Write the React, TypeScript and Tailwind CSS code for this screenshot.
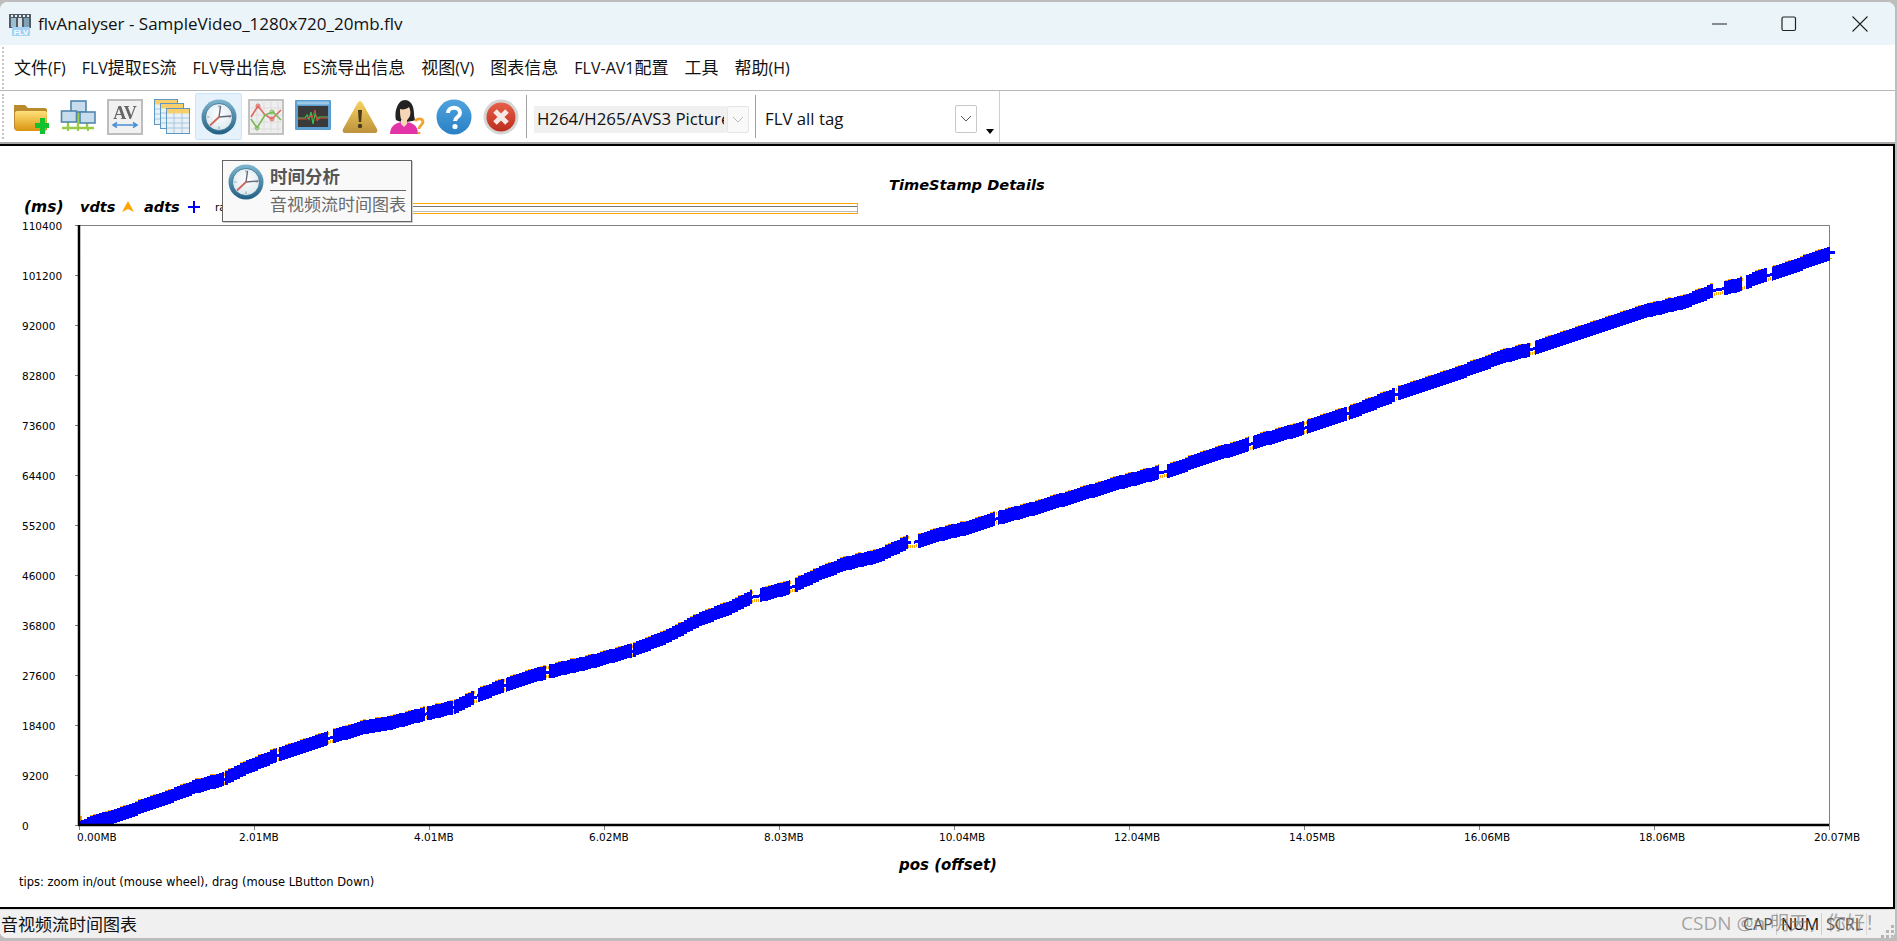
import React from "react";

const PTS: [number, number][] = [
  [80, 828],[87, 824],[110, 817],[160, 800],[193, 787],[223, 779],[240, 770],[273, 756],[327, 738],[360, 728],[393, 722],[423, 714],[453, 707],[473, 697],[503, 685],[527, 677],[546, 672],[593, 661],[632, 650],[667, 636],[697, 620],[733, 606],[750, 597],[760, 595],[790, 587],[820, 573],[843, 564],[877, 556],[907, 542],[918, 541],[947, 532],[967, 528],[993, 519],[1027, 510],[1077, 495],[1117, 483],[1159, 472],[1167, 471],[1203, 458],[1248, 444],[1253, 442],[1303, 428],[1348, 413],[1393, 395],[1460, 372],[1500, 357],[1530, 349],[1567, 337],[1640, 312],[1683, 302],[1713, 290],[1733, 286],[1765, 275],[1773, 273],[1830, 253],
];
const yAt = (x: number) => {
  if (x <= PTS[0][0]) return PTS[0][1];
  for (let i = 0; i < PTS.length - 1; i++) {
    const [a, b] = PTS[i];
    const [c, d] = PTS[i + 1];
    if (x >= a && x <= c) return b + ((d - b) * (x - a)) / (c - a);
  }
  return PTS[PTS.length - 1][1];
};
const NOTCHES: [number, number][] = [
  [224, 1],[277, 2],[328, 5],[425, 2],[453, 1],[474, 4],[504, 2],[546, 3],[632, 1],[752, 8],[790, 5],[908, 10],[995, 3],[1159, 8],[1249, 4],[1304, 3],[1347, 2],[1395, 3],[1530, 5],[1713, 11],[1742, 4],[1767, 5],
];
const inNotch = (x: number) => NOTCHES.find(([a, w]) => x >= a && x < a + w);
function buildBand() {
  let blue = "";
  let orange = "";
  for (let x = 80; x < 1830; x++) {
    const sx = x - (x % 3);
    const y = Math.round(yAt(sx));
    const n = inNotch(x);
    if (n) {
      const isGap = (n[0] === 908 && x >= 911 && x < 914) || n[0] === 1742;
      if (!isGap) blue += `M${x} ${y - 1}h1v3h-1z`;
      if (n[1] > 1 ? x % 2 === 0 : true) {
        orange += `M${x} ${y + 3}h1v3h-1z`;
        if (n[1] < 4 || x === n[0]) orange += `M${x} ${y - 6}h1v3h-1z`;
      }
    } else {
      const top = y - 7;
      const bottom = Math.min(y + 7, 825);
      blue += `M${x} ${top}h1v${bottom - top}h-1z`;
      if (x % 15 < 6) orange += `M${x} ${top - 1}h1v1h-1z`;
    }
  }
  blue += "M1830 251h5v3h-5z";
  orange += "M1828 250h2v1h-2zM1829 258h3v1h-3zM81 823h8v1h-8zM80 816h2v6h-2z";
  return { blue, orange };
}
const band = buildBand();

const MENU = ["文件(F)", "FLV提取ES流", "FLV导出信息", "ES流导出信息", "视图(V)", "图表信息", "FLV-AV1配置", "工具", "帮助(H)"];
const YL = ["110400", "101200", "92000", "82800", "73600", "64400", "55200", "46000", "36800", "27600", "18400", "9200", "0"];
const XL = ["0.00MB", "2.01MB", "4.01MB", "6.02MB", "8.03MB", "10.04MB", "12.04MB", "14.05MB", "16.06MB", "18.06MB", "20.07MB"];

const MenuLabel = ({ text }: { text: string }) => (
  <span className="whitespace-nowrap">
    {text.split(/([\u4e00-\u9fff]+)/).filter(Boolean).map((p, i) =>
      /[\u4e00-\u9fff]/.test(p) ? (
        <span key={i} className="text-[17px]">{p}</span>
      ) : (
        <span key={i} className="text-[16px]">{p}</span>
      )
    )}
  </span>
);

const Clock = ({ id, size = 36 }: { id: string; size?: number }) => (
  <svg width={size} height={size} viewBox="0 0 36 36">
    <defs>
      <linearGradient id={id} x1="0" y1="0" x2="0" y2="1">
        <stop offset="0" stopColor="#7fb6cf" />
        <stop offset="1" stopColor="#1f5f83" />
      </linearGradient>
      <radialGradient id={id + "f"} cx="0.5" cy="0.4" r="0.7">
        <stop offset="0" stopColor="#ffffff" />
        <stop offset="1" stopColor="#d4e4ec" />
      </radialGradient>
    </defs>
    <circle cx="18" cy="18" r="17.5" fill={`url(#${id})`} />
    <circle cx="18" cy="18" r="13.5" fill={`url(#${id + "f"})`} stroke="#2c6b8c" strokeWidth="0.8" />
    <path d="M18 6v2.500M18 27.500V30M6 18h2.500M27.500 18H30" stroke="#8da5b2" strokeWidth="1.2" />
    <path d="M18 18L19.500 7.500M18 18L30 17" stroke="#667" strokeWidth="1.4" fill="none" strokeLinecap="round" />
    <path d="M18 18L9.500 26" stroke="#d1685f" strokeWidth="1.8" strokeLinecap="round" />
  </svg>
);

const Folder = () => (
  <svg width="36" height="36" viewBox="0 0 36 36">
    <defs>
      <linearGradient id="fo" x1="0" y1="0" x2="0" y2="1">
        <stop offset="0" stopColor="#ffe27a" />
        <stop offset="1" stopColor="#d9930f" />
      </linearGradient>
    </defs>
    <path d="M1 6h11l3 3h17c1 0 2 1 2 2v20H3c-1 0-2-1-2-2z" fill="#b98a2e" />
    <path d="M2 14c0-1 1-2 2-2h28c1 0 2 1 2 2l-1 17c0 1-1 1-2 1H4c-1 0-2-1-2-2z" fill="url(#fo)" />
    <path d="M22 24h5v-5h5v5h5v5h-5v6h-5v-6h-5z" fill="#12c12e" />
  </svg>
);
const Net = () => (
  <svg width="36" height="36" viewBox="0 0 36 36">
    <path d="M18 12v16M8 22v6M27 22v6M2 29h32" stroke="#9acb46" strokeWidth="2.400" fill="none" />
    <path d="M8 32v-3M18 32v-3M28 32v-3" stroke="#9acb46" strokeWidth="2" />
    <rect x="11" y="2" width="15" height="11" fill="#c7dcec" stroke="#4f87ad" strokeWidth="1.600" />
    <rect x="1.500" y="12" width="15" height="11" fill="#c7dcec" stroke="#4f87ad" strokeWidth="1.600" />
    <rect x="20" y="13" width="15" height="11" fill="#c7dcec" stroke="#4f87ad" strokeWidth="1.600" />
  </svg>
);
const AV = () => (
  <svg width="36" height="36" viewBox="0 0 36 36">
    <rect x="1" y="1" width="34" height="34" fill="#f1f1f1" stroke="#bdbdbd" strokeWidth="2" />
    <text x="18" y="20" textAnchor="middle" fontFamily="Liberation Serif, serif" fontWeight="700" fontSize="18" fill="#666">AV</text>
    <path d="M6 26h24M10 23.500l-4 2.500 4 2.500M26 23.500l4 2.500-4 2.500" stroke="#4a90d9" strokeWidth="1.500" fill="none" />
  </svg>
);
const Tab = ({ x, y }: { x: number; y: number }) => (
  <g transform={`translate(${x} ${y})`}>
    <rect x="0.500" y="0.500" width="23" height="25" fill="#e8f1f8" stroke="#5d97c0" />
    <rect x="1" y="1" width="22" height="4.500" fill="#f8cf6b" />
    <path d="M1 10h22M1 15h22M1 20h22M8 5v20M16 5v20" stroke="#a9c6dc" strokeWidth="1" />
  </g>
);
const Tables = () => (
  <svg width="36" height="36" viewBox="0 0 36 36">
    <Tab x={0} y={0} />
    <Tab x={6} y={4} />
    <Tab x={12} y={9} />
  </svg>
);
const Graph = () => (
  <svg width="36" height="36" viewBox="0 0 36 36">
    <rect x="1" y="1" width="34" height="34" fill="#eeeeee" stroke="#c2c2c2" strokeWidth="2" />
    <path d="M3 9h30M3 16h30M3 23h30M3 30h30M9 3v30M16 3v30M23 3v30M30 3v30" stroke="#dcdcdc" strokeWidth="1" />
    <path d="M3 18L10 7l7 9 7 4 9-9" stroke="#e0685f" strokeWidth="1.600" fill="none" />
    <path d="M3 20l6 9 8-13 8-3 8 8" stroke="#7db95a" strokeWidth="1.600" fill="none" />
    <circle cx="10" cy="7" r="2" fill="none" stroke="#e0685f" />
    <circle cx="24" cy="20" r="2" fill="none" stroke="#e0685f" />
    <circle cx="9" cy="29" r="2" fill="none" stroke="#7db95a" />
    <circle cx="24" cy="13" r="2" fill="none" stroke="#7db95a" />
  </svg>
);
const Monitor = () => (
  <svg width="36" height="36" viewBox="0 0 36 36">
    <rect x="0" y="1" width="36" height="30" rx="1" fill="#5c9fd0" />
    <rect x="2" y="2.500" width="32" height="3" fill="#9cc9e8" />
    <rect x="3" y="7" width="30" height="21" fill="#3a3a3a" />
    <path d="M3 19h7l2-3 2 4 2-7 2 12 2-10 2 5 2-2h9" stroke="#3fc04d" strokeWidth="1.200" fill="none" />
    <path d="M3 20h9l3-3 2 2 3-8 2 11 3-3h8" stroke="#d9483f" strokeWidth="1" fill="none" />
  </svg>
);
const Warn = () => (
  <svg width="36" height="36" viewBox="0 0 36 36">
    <defs>
      <linearGradient id="wa" x1="0" y1="0" x2="0" y2="1">
        <stop offset="0" stopColor="#f6d25e" />
        <stop offset="1" stopColor="#bd923c" />
      </linearGradient>
    </defs>
    <path d="M18 2c1 0 2 1 2.500 2L35 30c1 2 0 4-2 4H3c-2 0-3-2-2-4L15.500 4C16 3 17 2 18 2z" fill="url(#wa)" />
    <path d="M16 11h4l-.8 12h-2.400z" fill="#4a3a20" />
    <circle cx="18" cy="27" r="2.200" fill="#4a3a20" />
  </svg>
);
const Person = () => (
  <svg width="36" height="36" viewBox="0 0 36 36">
    <path d="M1 35c0-8 6-12 14-12s14 3 14 12z" fill="#e233a8" />
    <path d="M7 21C5 12 9 1 16 1c8 0 9 10 9 14 0 3 1 5 1 6-3 2-15 3-19 0z" fill="#222" />
    <path d="M11 10c3 1 7 0 9-2 2 4 2 9-1 12-2 3-5 3-7 0-1-3-1-7-1-10z" fill="#f7d6b8" />
    <path d="M12 21h6v4l-3 3-3-3z" fill="#f7d6b8" />
    <path d="M26 22c2-3 8-3 8 1 0 3-4 3-4 7M30 33v2" stroke="#f0a42d" strokeWidth="2.800" fill="none" />
  </svg>
);
const Help = () => (
  <svg width="36" height="36" viewBox="0 0 36 36">
    <defs>
      <linearGradient id="he" x1="0" y1="0" x2="0" y2="1">
        <stop offset="0" stopColor="#4fa3de" />
        <stop offset="1" stopColor="#2a80c4" />
      </linearGradient>
    </defs>
    <circle cx="18" cy="18" r="17.500" fill="url(#he)" />
    <path d="M12 14c0-7 12-7 12 0 0 4-5 4-5 8" stroke="#fff" strokeWidth="4" fill="none" />
    <circle cx="19" cy="27.500" r="2.600" fill="#fff" />
  </svg>
);
const CloseIc = () => (
  <svg width="36" height="36" viewBox="0 0 36 36">
    <defs>
      <linearGradient id="cl" x1="0" y1="0" x2="0" y2="1">
        <stop offset="0" stopColor="#e8604a" />
        <stop offset="1" stopColor="#bb2c1c" />
      </linearGradient>
    </defs>
    <circle cx="18" cy="18" r="17.500" fill="#d5d5d5" />
    <circle cx="18" cy="18" r="14.500" fill="url(#cl)" />
    <path d="M12 12l12 12M24 12L12 24" stroke="#f6e8e4" strokeWidth="5" />
  </svg>
);
const AppIcon = () => (
  <svg width="22" height="24" viewBox="0 0 22 24" className="shrink-0">
    <rect x="0" y="2" width="22" height="14" fill="#4e5c68" />
    <path d="M2 3h2v2H2zM6 3h2v2H6zM10 3h2v2h-2zM14 3h2v2h-2zM18 3h2v2h-2z" fill="#e8eef2" />
    <rect x="2" y="6" width="5" height="9" fill="#9dbdd0" />
    <rect x="9" y="6" width="4" height="9" fill="#d6dee3" />
    <rect x="15" y="6" width="5" height="9" fill="#7fa0b5" />
    <rect x="3" y="15" width="18" height="9" rx="1" fill="#a5d3f5" />
    <text x="12" y="23" textAnchor="middle" fontFamily="Liberation Sans, sans-serif" fontWeight="700" fontSize="8" fill="#fff">FLV</text>
  </svg>
);

const TOOLS = [
  <Folder key="a" />, <Net key="b" />, <AV key="c" />, <Tables key="d" />, <Clock key="e" id="tbc" />,
  <Graph key="f" />, <Monitor key="g" />, <Warn key="h" />, <Person key="i" />, <Help key="j" />, <CloseIc key="k" />,
];

const Chev = ({ c }: { c: string }) => (
  <svg width="12" height="8" viewBox="0 0 12 8"><path d="M1 1l5 5 5-5" fill="none" stroke={c} strokeWidth="1" /></svg>
);

export default function App() {
  return (
    <div className="h-screen w-screen overflow-hidden bg-[#bdbdbd] pt-[2px] pr-[2px] pb-[3px] font-['Open_Sans','Noto_Sans_CJK_SC',sans-serif] text-black">
      <div className="relative flex h-full flex-col overflow-hidden rounded-t-[8px] rounded-b-[7px] bg-white">
        <header className="flex h-[43px] shrink-0 items-center bg-[#ebf4f8] pl-[9px]">
          <AppIcon />
          <span className="ml-[7px] text-[17px] leading-none text-[#111]">flvAnalyser - SampleVideo_1280x720_20mb.flv</span>
          <div className="ml-auto flex items-center">
            <svg width="16" height="16" viewBox="0 0 16 16" className="mr-[53px]"><path d="M0 8h15" stroke="#222" strokeWidth="1" /></svg>
            <svg width="16" height="16" viewBox="0 0 16 16" className="mr-[55px]"><rect x="1" y="1" width="13.500" height="13.500" rx="1.500" fill="none" stroke="#222" strokeWidth="1.200" /></svg>
            <svg width="16" height="16" viewBox="0 0 16 16" className="mr-[27px]"><path d="M.5.5l15 15M15.500.5l-15 15" stroke="#222" strokeWidth="1.100" /></svg>
          </div>
        </header>

        <nav className="flex h-[46px] shrink-0 items-center border-b border-[#b8b8b8] pl-[2px] leading-none text-[#111]">
          <div className="h-[42px] w-0 border-l-2 border-dotted border-[#c4c4c4]" />
          <div className="ml-[10px] flex items-center gap-[16px]">
            {MENU.map((m) => (
              <MenuLabel key={m} text={m} />
            ))}
          </div>
        </nav>

        <div className="flex h-[53px] shrink-0 border-b-[2px] border-[#a8a8a8]">
          <div className="flex w-[1000px] items-stretch border-r border-[#cfcfcf] pl-[2px]">
            <div className="my-[3px] w-0 border-l-2 border-dotted border-[#c4c4c4]" />
            <div className="ml-[3px] flex">
              {TOOLS.map((t, i) => (
                <div
                  key={i}
                  className={
                    i === 4
                      ? "my-[2px] flex w-[47px] items-center justify-center rounded-[2px] border border-[#cce4f7] bg-[#e5f1fb] blur-[0.3px]"
                      : "my-[2px] flex w-[47px] items-center justify-center blur-[0.3px]"
                  }
                >
                  {t}
                </div>
              ))}
            </div>
            <div className="my-[4px] ml-[2px] w-px bg-[#a0a0a0]" />
            <div className="ml-[7px] mt-[15px] flex h-[27px] w-[215px]">
              <div className="h-full w-[193px] bg-[#f0f0f0] pl-[3px] pr-[3px]">
                <div className="h-full overflow-hidden whitespace-nowrap text-[16.800px] leading-[26px] text-[#111]">H264/H265/AVS3 Picture</div>
              </div>
              <div className="flex h-full w-[22px] items-center justify-center rounded-[2px] border border-[#e5e5e5] bg-[#f9f9f9]"><Chev c="#bbb" /></div>
            </div>
            <div className="my-[4px] ml-[6px] w-px bg-[#a0a0a0]" />
            <div className="ml-[9px] mt-[15px] h-[27px] w-[190px] text-[16.800px] leading-[26px] text-[#111]">FLV all tag</div>
            <div className="mt-[14px] flex h-[28px] w-[22px] items-center justify-center rounded-[2px] border border-[#c8c8c8] bg-white"><Chev c="#555" /></div>
            <div className="ml-[9px] mt-[38px] h-0 w-0 border-x-[4px] border-t-[5px] border-x-transparent border-t-black" />
          </div>
        </div>

        <main className="relative min-h-0 flex-1 border-y-[2px] border-r-[2px] border-y-black border-r-black bg-white">
          <svg width="1893" height="761" viewBox="0 146 1893 761" className="block font-['DejaVu_Sans',sans-serif]">
            <text x="889" y="190" fontSize="14.600" fontWeight="700" fontStyle="italic" fill="#000">TimeStamp Details</text>
            <text x="24" y="212" fontSize="15.500" fontWeight="700" fontStyle="italic" fill="#000">(ms)</text>
            <text x="80" y="212" fontSize="14.500" fontWeight="700" fontStyle="italic" fill="#000">vdts</text>
            <path d="M122 212l6-11 6 11-6-3z" fill="#ffa500" />
            <text x="144" y="212" fontSize="14.500" fontWeight="700" fontStyle="italic" fill="#000">adts</text>
            <path d="M188 207h12M194 201v12" stroke="#0000ff" strokeWidth="2" />
            <text x="215" y="211" fontSize="10.500" fill="#000">ra</text>
            <rect x="230.500" y="203.500" width="627" height="10" fill="#fff" stroke="#ffa500" />
            <path d="M231 206.500h626" stroke="#777" />
            <path d="M231 211.500h626" stroke="#bbb" />

            <path d="M75 225.500H1829.500V826" fill="none" stroke="#808080" />
            {YL.map((l, i) => (
              <g key={l}>
                <path d={`M75 ${225.5 + i * 50}h4`} stroke="#808080" />
                <text x="22" y={230 + i * 50} fontSize="10.500" fill="#000">{l}</text>
              </g>
            ))}
            {XL.map((l, i) => {
              const tx = 79 + i * 175;
              return (
                <g key={l}>
                  <path d={`M${tx + 0.5} 826v4`} stroke="#808080" />
                  <text x={i === 0 ? 77 : tx - 15} y="841" fontSize="10.500" fill="#000">{l}</text>
                </g>
              );
            })}
            <path d={band.orange} fill="#ffa500" shapeRendering="crispEdges" />
            <path d={band.blue} fill="#0000ff" shapeRendering="crispEdges" />
            <path d="M79 225V826M78 825H1829" fill="none" stroke="#000" strokeWidth="2.500" />

            <text x="899" y="870" fontSize="15" fontWeight="700" fontStyle="italic" fill="#000">pos (offset)</text>
            <text x="19" y="886" fontSize="11.500" fill="#000">tips: zoom in/out (mouse wheel), drag (mouse LButton Down)</text>
          </svg>

          <div className="absolute left-[222px] top-[14px] flex h-[62px] w-[190px] border border-[#646464] bg-[#f9f9f9] pl-[5px] pt-[3px] shadow-[1px_1px_0_#cfcfcf]">
            <Clock id="ttc" />
            <div className="ml-[6px] flex w-[136px] flex-col">
              <div className="h-[27px] border-b border-[#666] text-[17.500px] font-bold leading-[25px] text-[#555]">时间分析</div>
              <div className="whitespace-nowrap text-[17px] leading-[28px] text-[#6a6a6a]">音视频流时间图表</div>
            </div>
          </div>
        </main>

        <footer className="relative flex h-[29px] shrink-0 items-center border-t border-[#dcdcdc] bg-[#f0f0f0]">
          <span className="pl-[1px] text-[17px] leading-none text-[#111]">音视频流时间图表</span>
          <div className="ml-auto flex h-full items-center pr-[28px] text-[16px] leading-none">
            <span className="w-[33px] text-[#555]">CAP</span>
            <span className="h-[22px] w-px bg-[#cfcfcf]" />
            <span className="w-[44px] pl-[4px] text-[#111]">NUM</span>
            <span className="h-[22px] w-px bg-[#cfcfcf]" />
            <span className="w-[44px] pl-[4px] text-[#555]">SCRL</span>
            <span className="h-[22px] w-px bg-[#d8d8d8]" />
          </div>
          <span className="absolute bottom-[3px] left-[1681px] whitespace-nowrap text-[19px] leading-[24px] text-[#808080]/70">CSDN @n 明天，你好！</span>
          <svg width="14" height="13" viewBox="0 0 14 13" className="absolute bottom-0 right-0">
            <path d="M10 0h3v3h-3zM5 5h3v3H5zM10 5h3v3h-3zM0 10h3v3H0zM5 10h3v3H5zM10 10h3v3h-3z" fill="#b4b4b4" />
          </svg>
        </footer>
      </div>
    </div>
  );
}
